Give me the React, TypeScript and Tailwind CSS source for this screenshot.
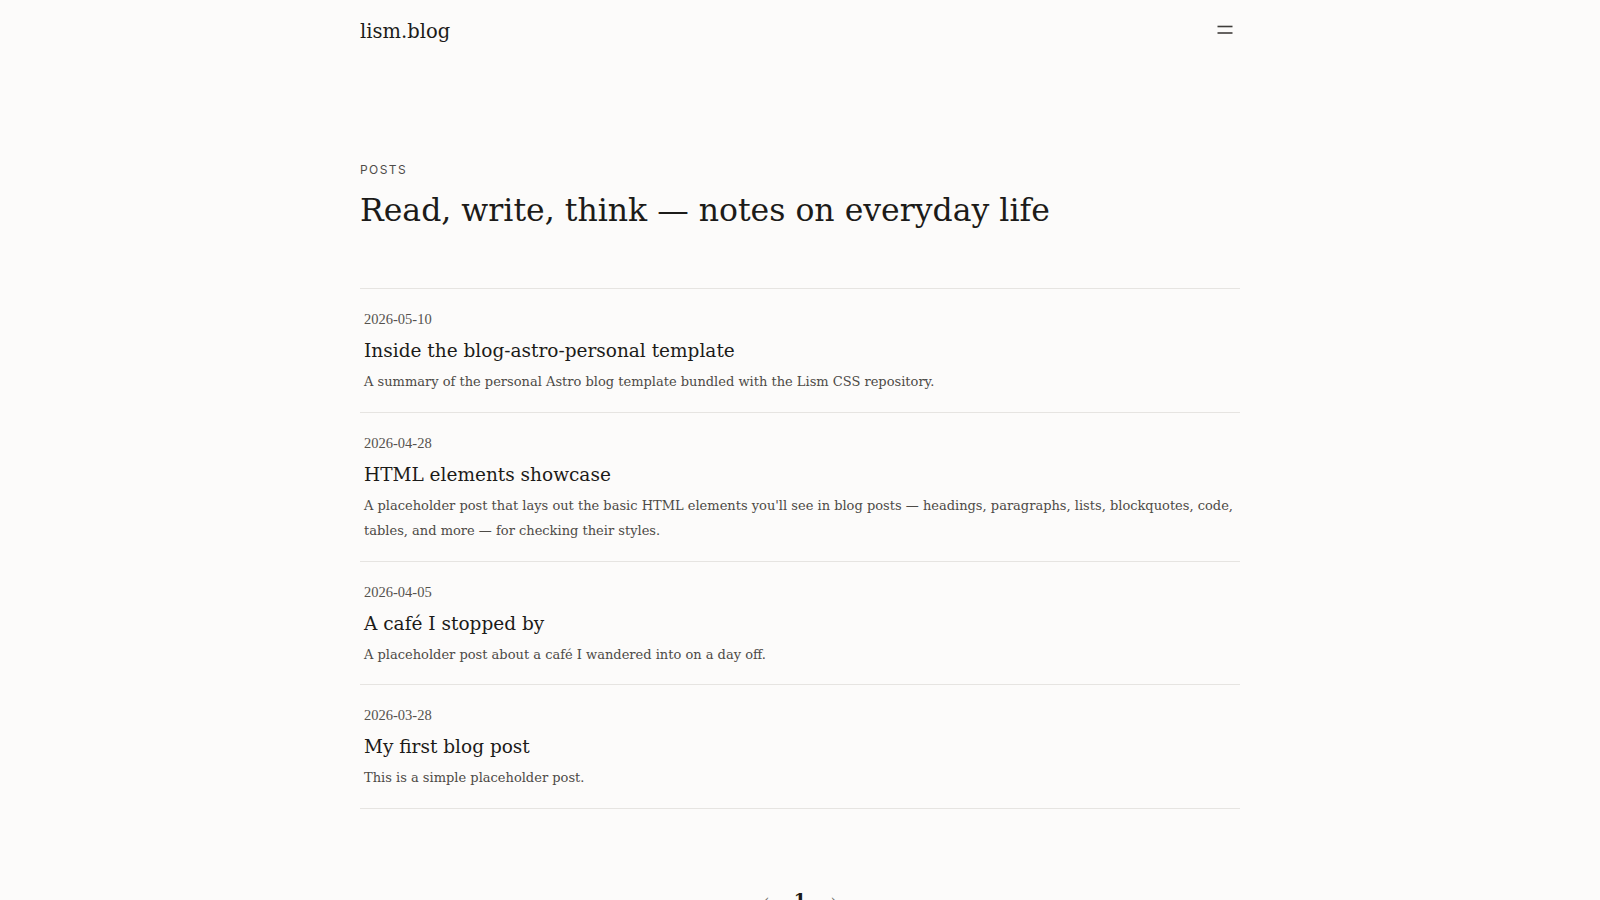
import React from 'react';

interface Post {
  date: string;
  title: string;
  excerpt: string;
}

const posts: Post[] = [
  {
    date: '2026-05-10',
    title: 'Inside the blog-astro-personal template',
    excerpt: 'A summary of the personal Astro blog template bundled with the Lism CSS repository.',
  },
  {
    date: '2026-04-28',
    title: 'HTML elements showcase',
    excerpt:
      "A placeholder post that lays out the basic HTML elements you'll see in blog posts — headings, paragraphs, lists, blockquotes, code, tables, and more — for checking their styles.",
  },
  {
    date: '2026-04-05',
    title: 'A café I stopped by',
    excerpt: 'A placeholder post about a café I wandered into on a day off.',
  },
  {
    date: '2026-03-28',
    title: 'My first blog post',
    excerpt: 'This is a simple placeholder post.',
  },
];

const serif = "font-['DejaVu_Serif','Liberation_Serif',serif]";

const PostItem: React.FC<{ post: Post }> = ({ post }) => (
  <li className="border-b border-[#e6e4e1]">
    <a href="#" className="block px-[4px] pt-[20px] pb-[17px]">
      <time className="block font-['Liberation_Serif',serif] text-[14.5px] leading-[20px] text-[#55524e]">
        {post.date}
      </time>
      <h2 className="mt-[7px] text-[18.5px] leading-[30px] text-[#1c1b19]">{post.title}</h2>
      <p className="mt-[3px] text-[13px] leading-[25.5px] text-[#4d4a46]">{post.excerpt}</p>
    </a>
  </li>
);

export default function App() {
  return (
    <div className={`min-h-screen bg-[#fcfbfa] text-[#1c1b19] ${serif}`}>
      <header className="mx-auto flex h-[60px] w-[880px] items-center justify-between">
        <a href="#" className="pt-[4px] text-[19.5px] leading-none text-[#1c1b19]">
          lism.blog
        </a>
        <button className="mr-[3px] flex h-[24px] w-[24px] items-center justify-center text-[#3f3d3a]" aria-label="Menu">
          <svg width="16" height="16" viewBox="0 0 16 16" fill="none" stroke="currentColor" strokeWidth="1.6">
            <line x1="0.5" y1="4.5" x2="15.5" y2="4.5" />
            <line x1="0.5" y1="11" x2="15.5" y2="11" />
          </svg>
        </button>
      </header>

      <main className="mx-auto w-[880px]">
        <section className="pt-[102px]">
          <p className="font-['Inter','Liberation_Sans',sans-serif] text-[12px] leading-[16px] tracking-[0.12em] text-[#4f4c48]">
            POSTS
          </p>
          <h1 className="mt-[9px] text-[31.5px] leading-[46px] text-[#1c1b19]">
            Read, write, think — notes on everyday life
          </h1>
        </section>

        <ul className="mt-[55px] border-t border-[#e6e4e1]">
          {posts.map((post) => (
            <PostItem key={post.date} post={post} />
          ))}
        </ul>

        <nav className="mt-[80px] flex items-center justify-center gap-[24px] pb-[40px] text-[18px] leading-[24px]">
          <span className="text-[#6f6c68]">‹</span>
          <span className="font-bold text-[#1c1b19]">1</span>
          <span className="text-[#6f6c68]">›</span>
        </nav>
      </main>
    </div>
  );
}
